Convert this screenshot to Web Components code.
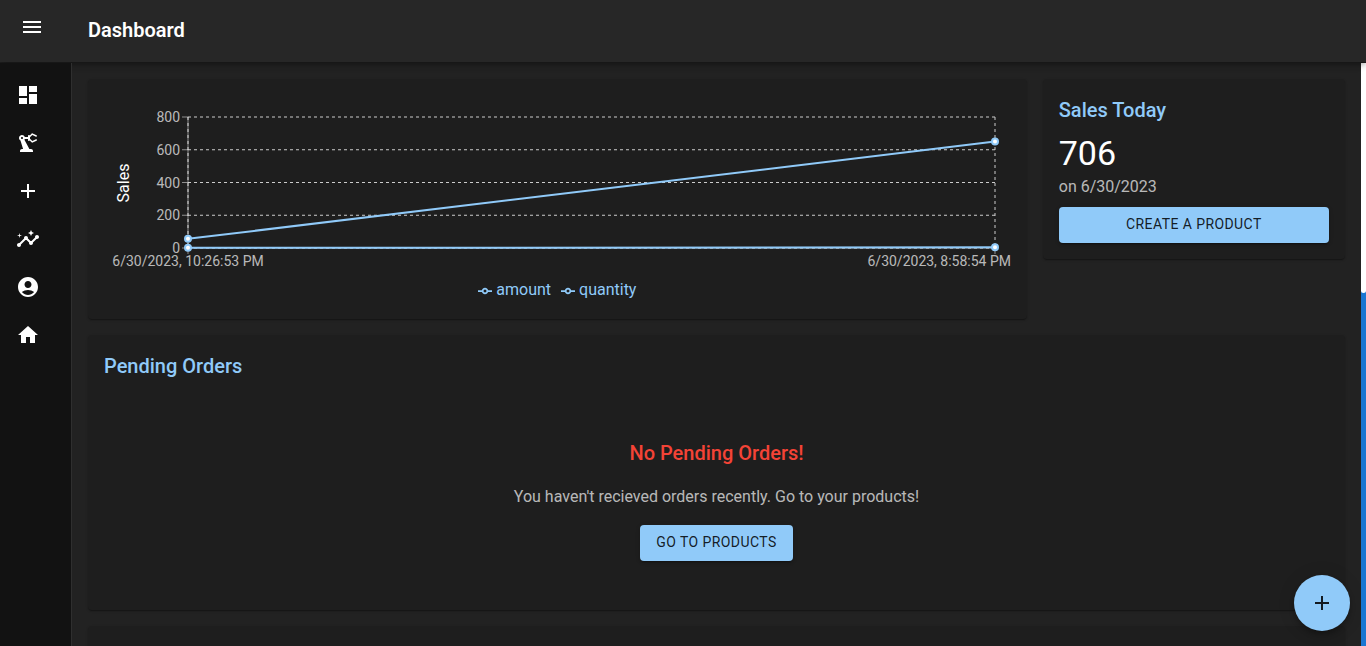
<!DOCTYPE html>
<html lang="en">
<head>
<meta charset="utf-8">
<meta name="viewport" content="width=device-width, initial-scale=1">
<title>Dashboard</title>
<style>
  :root {
    --primary: #90caf9;
    --surface: #1e1e1e;
    --text: #fff;
    --muted: rgba(255, 255, 255, .7);
    --on-primary: rgba(0, 0, 0, .87);
  }
  body { margin: 0; background: #222; color: var(--text); font: 16px/24px Roboto, sans-serif; }
</style>
</head>
<body>
<app-shell>
  <app-bar slot="bar" heading="Dashboard"></app-bar>
  <side-nav slot="nav"></side-nav>
  <dash-card span="9"><sales-chart></sales-chart></dash-card>
  <dash-card span="3" heading="Sales Today"><sales-total amount="706" date="6/30/2023"></sales-total></dash-card>
  <dash-card span="12" heading="Pending Orders"><empty-orders></empty-orders></dash-card>
  <dash-card span="12"></dash-card>
  <fab-button slot="fab"></fab-button>
</app-shell>

<script>
const ICONS = {
  menu: 'M3 18h18v-2H3v2zm0-5h18v-2H3v2zm0-7v2h18V6H3z',
  dashboard: 'M3 13h8V3H3v10zm0 8h8v-6H3v6zm10 0h8V11h-8v10zm0-18v6h8V3h-8z',
  factory: 'M19.93 8.35l-3.6 1.68L14 7.7V6.3l2.33-2.33 3.6 1.68c.38.18.82.01 1-.36.18-.38.01-.82-.36-1l-3.92-1.83c-.38-.18-.83-.1-1.13.2L13.78 4.4c-.18-.24-.46-.4-.78-.4-.55 0-1 .45-1 1v1H8.82C8.4 4.84 7.3 4 6 4 4.34 4 3 5.34 3 7c0 1.1.6 2.05 1.48 2.58L7.08 18H6c-1.1 0-2 .9-2 2v1h13v-1c0-1.1-.9-2-2-2h-1.62L8.41 8.77c.17-.24.31-.49.41-.77H12v1c0 .55.45 1 1 1 .32 0 .6-.16.78-.4l1.74 1.74c.3.3.75.38 1.13.2l3.92-1.83c.38-.18.54-.62.36-1-.18-.37-.62-.54-1-.36zM6 8c-.55 0-1-.45-1-1s.45-1 1-1 1 .45 1 1-.45 1-1 1z',
  add: 'M19 13h-6v6h-2v-6H5v-2h6V5h2v6h6v2z',
  insights: 'M21 8c-1.45 0-2.26 1.44-1.93 2.51l-3.55 3.56c-.3-.09-.74-.09-1.04 0l-2.55-2.55C12.27 10.45 11.46 9 10 9c-1.45 0-2.27 1.44-1.93 2.52l-4.56 4.55C2.44 15.74 1 16.55 1 18c0 1.1.9 2 2 2 1.45 0 2.26-1.44 1.93-2.51l4.55-4.56c.3.09.74.09 1.04 0l2.55 2.55C12.73 16.55 13.54 18 15 18c1.45 0 2.27-1.44 1.93-2.52l3.56-3.55C21.56 12.26 23 11.45 23 10c0-1.1-.9-2-2-2zM15 9l.94-2.07L18 6l-2.06-.93L15 3l-.92 2.07L12 6l2.08.93zM3.5 11L4 9l2-.5L4 8l-.5-2L3 8l-2 .5L3 9z',
  account: 'M12 2C6.48 2 2 6.48 2 12s4.48 10 10 10 10-4.48 10-10S17.52 2 12 2zm0 4c1.93 0 3.5 1.57 3.5 3.5S13.93 13 12 13s-3.5-1.57-3.5-3.5S10.07 6 12 6zm0 14c-2.03 0-4.43-.82-6.14-2.88C7.55 15.8 9.68 15 12 15s4.45.8 6.14 2.12C16.43 19.18 14.03 20 12 20z',
  home: 'M10 20v-6h4v6h5v-8h3L12 3 2 12h3v8z'
};
const icon = name => `<svg viewBox="0 0 24 24" width="24" height="24" fill="currentColor" aria-hidden="true"><path d="${ICONS[name]}"/></svg>`;

class Base extends HTMLElement {
  connectedCallback() {
    if (this.shadowRoot) return;
    this.attachShadow({ mode: 'open' }).innerHTML =
      `<style>*{box-sizing:border-box} h1,h2,h3,p{margin:0} svg{display:block}</style>` + this.render();
  }
}

customElements.define('app-shell', class extends Base {
  render() {
    return `<style>
      :host { display: flex; flex-direction: column; height: 100vh; overflow: hidden; }
      .body { display: flex; flex: 1; min-height: 0; }
      main { flex: 1; min-width: 0; overflow: hidden; padding: 16px; display: grid;
        grid-template-columns: repeat(12, 1fr); grid-auto-rows: max-content; gap: 16px; align-items: start; align-content: start; }
      .track { width: 5px; background: #1976d2; }
      .thumb { height: 39.5%; background: #fff; border-radius: 0 0 3px 3px; }
      .fab { position: fixed; right: 16px; bottom: 15px; }
    </style>
    <slot name="bar"></slot>
    <div class="body"><slot name="nav"></slot><main><slot></slot></main>
      <div class="track"><div class="thumb"></div></div></div>
    <div class="fab"><slot name="fab"></slot></div>`;
  }
});

customElements.define('app-bar', class extends Base {
  render() {
    return `<style>
      :host { display: block; position: relative; z-index: 2; }
      header { display: flex; align-items: center; height: 62px; margin-bottom: 1px; padding: 0 20px; gap: 44px; background: #272727;
        box-shadow: 0 2px 4px -1px rgba(0,0,0,.2), 0 4px 5px rgba(0,0,0,.14), 0 1px 10px rgba(0,0,0,.12); }
      button { border: 0; background: none; color: inherit; padding: 0 0 8px; }
      h1 { font-size: 20px; line-height: 32px; font-weight: 600; padding-bottom: 2px; }
    </style>
    <header><button aria-label="Open menu">${icon('menu')}</button><h1>${this.getAttribute('heading')}</h1></header>`;
  }
});

customElements.define('side-nav', class extends Base {
  render() {
    const items = [['dashboard', 'Dashboard'], ['factory', 'Products'], ['add', 'Add product'],
      ['insights', 'Insights'], ['account', 'Account'], ['home', 'Home']];
    return `<style>
      :host { display: block; flex: none; width: 72px; background: #121212; border-right: 1px solid #2f2f2f; box-sizing: border-box; position: relative; z-index: 3; }
      nav { padding-top: 8px; }
      a { display: flex; align-items: center; height: 48px; padding: 0 16px; color: inherit; }
    </style>
    <nav>${items.map(([i, label]) => `<a href="#${i}" aria-label="${label}">${icon(i)}</a>`).join('')}</nav>`;
  }
});

customElements.define('dash-card', class extends Base {
  render() {
    const heading = this.getAttribute('heading');
    return `<style>
      :host { display: block; grid-column: span ${this.getAttribute('span')}; min-width: 0; min-height: 180px; padding: 16px; box-sizing: border-box;
        background: var(--surface); border-radius: 4px;
        box-shadow: 0 2px 1px -1px rgba(0,0,0,.2), 0 1px 1px rgba(0,0,0,.14), 0 1px 3px rgba(0,0,0,.12); }
      h2 { color: var(--primary); font-size: 20px; line-height: 30px; font-weight: 500; margin-bottom: 6px; }
    </style>${heading ? `<h2>${heading}</h2>` : ''}<slot></slot>`;
  }
});

customElements.define('ui-button', class extends Base {
  render() {
    return `<style>
      :host { display: inline-block; }
      button { display: block; width: 100%; height: 36px; padding: 0 16px 2px; border: 0; border-radius: 4px;
        background: var(--primary); color: var(--on-primary); font: 400 14px/24px Roboto, sans-serif; letter-spacing: .03em;
        text-transform: uppercase;
        box-shadow: 0 3px 1px -2px rgba(0,0,0,.2), 0 2px 2px rgba(0,0,0,.14), 0 1px 5px rgba(0,0,0,.12); }
    </style><button type="button"><slot></slot></button>`;
  }
});

customElements.define('sales-total', class extends Base {
  render() {
    return `<style>
      :host { display: block; }
      .total { font-size: 34px; line-height: 44px; }
      .date { color: var(--muted); margin-bottom: 8px; }
      ui-button { display: block; }
    </style>
    <p class="total">${this.getAttribute('amount')}</p>
    <p class="date">on ${this.getAttribute('date')}</p>
    <ui-button>Create a product</ui-button>`;
  }
});

customElements.define('empty-orders', class extends Base {
  render() {
    return `<style>
      :host { display: flex; flex-direction: column; align-items: center; gap: 16px; padding: 50px 0 33px; text-align: center; }
      h3 { color: #f44336; font-size: 20px; line-height: 32px; font-weight: 500; }
      p { color: var(--muted); }
    </style>
    <h3>No Pending Orders!</h3>
    <p>You haven't recieved orders recently. Go to your products!</p>
    <ui-button>Go to products</ui-button>`;
  }
});

customElements.define('sales-chart', class extends Base {
  connectedCallback() {
    super.connectedCallback();
    this.draw();
    new ResizeObserver(() => this.draw()).observe(this);
  }
  render() {
    return `<style>
      :host { display: block; height: 208px; }
      svg.plot { width: 100%; height: 183px; overflow: visible; }
      text { font-size: 14px; fill: rgba(255,255,255,.7); }
      text.title { font-size: 16px; fill: #fff; }
      .grid { stroke: #ccc; stroke-dasharray: 3; }
      .axis { stroke: rgba(255,255,255,.5); }
      .line { stroke: var(--primary); stroke-width: 2; }
      circle { fill: #fff; stroke: var(--primary); stroke-width: 2; }
      ul { display: flex; justify-content: center; gap: 10px; margin: 0; padding: 0; list-style: none; color: var(--primary); }
      li { display: flex; align-items: center; gap: 4px; }
      li svg { fill: none; stroke: var(--primary); stroke-width: 4; margin-top: 2px; }
    </style>
    <svg class="plot" role="img" aria-label="Sales over time"></svg>
    <ul>${['amount', 'quantity'].map(n => `<li><svg width="14" height="14" viewBox="0 0 32 32"><path d="M0 16h10.67A5.33 5.33 0 1 1 21.33 16H32M21.33 16A5.33 5.33 0 1 1 10.67 16"/></svg>${n}</li>`).join('')}</ul>`;
  }
  draw() {
    const w = this.clientWidth;
    if (!w) return;
    const left = 84, right = w - 16, top = 22, bottom = 153, max = 800;
    const y = v => bottom - v / max * (bottom - top);
    const line = (cls, x1, y1, x2, y2) => `<line class="${cls}" x1="${x1}" y1="${y1}" x2="${x2}" y2="${y2}"/>`;
    const ticks = [0, 200, 400, 600, 800];
    const series = [[56, 650], [1, 4]];
    this.shadowRoot.querySelector('.plot').innerHTML =
      ticks.map(t => line('grid', left, y(t), right, y(t))).join('') +
      [left, right].map(x => line('grid', x, top, x, bottom) + line('axis', x, bottom, x, bottom + 6)).join('') +
      line('axis', left, top, left, bottom) + line('axis', left, bottom, right, bottom) +
      ticks.map(t => line('axis', left - 6, y(t), left, y(t)) +
        `<text x="${left - 8}" y="${y(t) + 5}" text-anchor="end">${t}</text>`).join('') +
      `<text x="${left}" y="171" text-anchor="middle">6/30/2023, 10:26:53 PM</text>` +
      `<text x="${w}" y="171" text-anchor="end">6/30/2023, 8:58:54 PM</text>` +
      `<text class="title" transform="translate(25 88) rotate(-90)" text-anchor="middle">Sales</text>` +
      series.map(([a, b]) => line('line', left, y(a), right, y(b)) +
        `<circle cx="${left}" cy="${y(a)}" r="3"/><circle cx="${right}" cy="${y(b)}" r="3"/>`).join('');
  }
});

customElements.define('fab-button', class extends Base {
  render() {
    return `<style>
      :host { display: block; }
      button { display: grid; place-items: center; width: 56px; height: 56px; padding: 0; border: 0; border-radius: 50%;
        background: var(--primary); color: var(--on-primary);
        box-shadow: 0 3px 5px -1px rgba(0,0,0,.2), 0 6px 10px rgba(0,0,0,.14), 0 1px 18px rgba(0,0,0,.12); }
    </style><button type="button" aria-label="Add">${icon('add')}</button>`;
  }
});
</script>
</body>
</html>
